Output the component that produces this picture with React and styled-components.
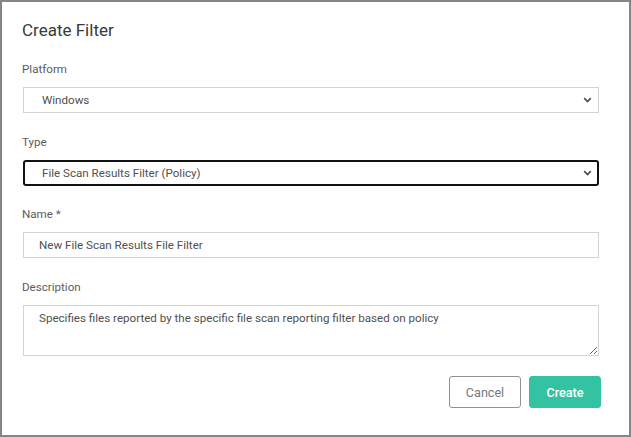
import React, { useState } from 'react'
import styled, { createGlobalStyle } from 'styled-components'

const GlobalStyle = createGlobalStyle`
	* {
		box-sizing: border-box;
	}
	html,
	body {
		margin: 0;
		padding: 0;
		background: #ffffff;
	}
	body {
		font-family: Roboto, 'Liberation Sans', Arial, sans-serif;
	}
`

const Modal = styled.div`
	width: 631px;
	height: 437px;
	border: 2px solid #858585;
	background: #ffffff;
	padding: 18px 28px 0 20px;
	display: flex;
	flex-direction: column;
`

const Title = styled.h2`
	margin: 0 0 20px;
	font-size: 17px;
	line-height: 20px;
	font-weight: 400;
	color: #3a3a3a;
`

const Field = styled.div`
	display: flex;
	flex-direction: column;
	margin-bottom: ${p => p.$gap || 20}px;
`

const Label = styled.label`
	font-size: 11.6px;
	line-height: 18px;
	color: #5c5c5c;
	margin-bottom: 9px;
`

const SelectWrap = styled.div`
	position: relative;
	margin: 0 2px 0 1px;
`

const Select = styled.select`
	appearance: none;
	width: 100%;
	height: 26px;
	font-family: inherit;
	font-size: 11.6px;
	color: #505050;
	background: #ffffff;
	padding: 0 30px 0 ${p => (p.$focused ? 17 : 18)}px;
	border: ${p => (p.$focused ? '2px solid #111111' : '1px solid #d4d4d4')};
	border-radius: ${p => (p.$focused ? '3px' : '0')};
	outline: none;
`

const Chevron = styled.svg`
	position: absolute;
	right: 7px;
	top: 50%;
	width: 9px;
	height: 6px;
	margin-top: -3px;
	pointer-events: none;
`

const TextInput = styled.input`
	margin: 0 2px 0 1px;
	height: 26px;
	font-family: inherit;
	font-size: 11.6px;
	color: #505050;
	padding: 0 15px;
	border: 1px solid #d4d4d4;
	outline: none;
`

const TextArea = styled.textarea`
	margin: 0 2px 0 1px;
	height: 51px;
	font-family: inherit;
	font-size: 11.6px;
	line-height: 16px;
	color: #505050;
	padding: 4px 15px;
	border: 1px solid #d4d4d4;
	outline: none;
	resize: vertical;
`

const Footer = styled.div`
	display: flex;
	justify-content: flex-end;
	gap: 8px;
`

const Button = styled.button`
	width: 72px;
	height: 32px;
	font-family: inherit;
	font-size: 12.6px;
	border-radius: 3px;
	cursor: pointer;
	border: 1px solid ${p => (p.$primary ? '#33c3a2' : '#8c939b')};
	background: ${p => (p.$primary ? '#33c3a2' : '#ffffff')};
	color: ${p => (p.$primary ? '#ffffff' : '#737a80')};
	font-weight: ${p => (p.$primary ? 500 : 400)};
`

const ChevronIcon = () => (
	<Chevron viewBox="0 0 9 6">
		<path d="M1.2 1.2 L4.5 4.5 L7.8 1.2" fill="none" stroke="#505050" strokeWidth="1.7" />
	</Chevron>
)

export default function App() {
	const [platform, setPlatform] = useState('windows')
	const [type, setType] = useState('fsr')
	const [name, setName] = useState('New File Scan Results File Filter')
	const [description, setDescription] = useState(
		'Specifies files reported by the specific file scan reporting filter based on policy'
	)

	return (
		<>
			<GlobalStyle />
			<Modal>
				<Title>Create Filter</Title>
				<Field>
					<Label>Platform</Label>
					<SelectWrap>
						<Select value={platform} onChange={e => setPlatform(e.target.value)}>
							<option value="windows">Windows</option>
							<option value="mac">macOS</option>
							<option value="linux">Linux</option>
						</Select>
						<ChevronIcon />
					</SelectWrap>
				</Field>
				<Field $gap={19}>
					<Label>Type</Label>
					<SelectWrap>
						<Select $focused value={type} onChange={e => setType(e.target.value)}>
							<option value="fsr">File Scan Results Filter (Policy)</option>
						</Select>
						<ChevronIcon />
					</SelectWrap>
				</Field>
				<Field>
					<Label>Name *</Label>
					<TextInput value={name} onChange={e => setName(e.target.value)} />
				</Field>
				<Field $gap={20}>
					<Label>Description</Label>
					<TextArea value={description} onChange={e => setDescription(e.target.value)} />
				</Field>
				<Footer>
					<Button>Cancel</Button>
					<Button $primary>Create</Button>
				</Footer>
			</Modal>
		</>
	)
}
